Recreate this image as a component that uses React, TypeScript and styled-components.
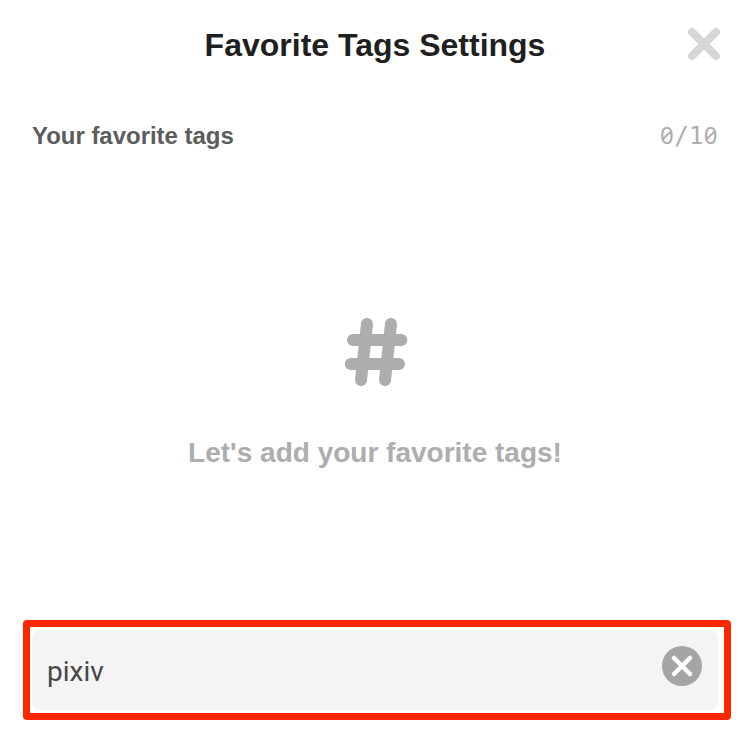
import React from "react";
import styled, { createGlobalStyle } from "styled-components";

const GlobalStyle = createGlobalStyle`
  *, *::before, *::after { box-sizing: border-box; }
  body { margin: 0; background: #fff; font-family: "Liberation Sans", Arial, sans-serif; }
`;

const Dialog = styled.main`
  display: flex;
  flex-direction: column;
  width: 750px;
  height: 736px;
  background: #fff;
  overflow: hidden;
`;

const Header = styled.header`
  display: grid;
  grid-template-columns: 64px 1fr 64px;
  align-items: center;
  height: 88px;
`;

const Title = styled.h1`
  grid-column: 2;
  margin: 0;
  padding-top: 2px;
  text-align: center;
  white-space: nowrap;
  font-size: 32px;
  line-height: 40px;
  font-weight: 700;
  color: #1f1f1f;
`;

const IconButton = styled.button`
  display: block;
  align-self: start;
  padding: 0;
  border: 0;
  background: none;
  line-height: 0;
`;

const CloseButton = styled(IconButton)`
  align-self: center;
  justify-self: end;
  margin-right: 28px;
`;

const SectionHeader = styled.div`
  display: flex;
  justify-content: space-between;
  align-items: center;
  height: 32px;
  margin-top: 32px;
  padding: 0 32px;
`;

const SectionTitle = styled.h2`
  margin: 0;
  font-size: 24px;
  line-height: 32px;
  font-weight: 700;
  letter-spacing: -0.03px;
  color: #5c5c5c;
`;

const Counter = styled.div`
  display: grid;
  grid-template-columns: repeat(4, 14.6px);
  justify-items: center;
  align-items: baseline;
  margin-bottom: 2px;
  line-height: 32px;
  color: #adadad;
`;

const Digit = styled.span<{ $font: string; $size: number }>`
  font-family: ${(p) => p.$font}, monospace;
  font-size: ${(p) => p.$size}px;
  font-feature-settings: "zero";
`;

const Empty = styled.section`
  display: flex;
  flex-direction: column;
  align-items: center;
  height: 468px;
  padding-top: 160px;
`;

const EmptyText = styled.p`
  margin: 41px 0 0;
  font-size: 28px;
  line-height: 40px;
  font-weight: 700;
  color: #adadad;
`;

const Highlight = styled.div`
  width: 708px;
  height: 100px;
  margin-left: 23px;
  padding: 3px 6px 3px 2px;
  border: 7px solid #ff2600;
  border-radius: 4px;
`;

const Field = styled.label`
  display: flex;
  justify-content: space-between;
  height: 80px;
  padding: 16px 16px 0 15px;
  border-radius: 8px;
  background: #f4f4f4;
`;

const Input = styled.input`
  flex: 1;
  min-width: 0;
  height: 50px;
  padding: 0;
  border: 0;
  outline: 0;
  background: transparent;
  font-family: Roboto, sans-serif;
  font-size: 28px;
  color: #474747;
`;

export default function App() {
  return (
    <>
      <GlobalStyle />
      <Dialog>
        <Header>
          <Title>Favorite Tags Settings</Title>
          <CloseButton aria-label="Close">
            <svg width="36" height="36" viewBox="0 0 36 36" fill="none" stroke="#d6d6d6" strokeWidth="8" strokeLinecap="round">
              <path d="M6 6 30 30M30 6 6 30" />
            </svg>
          </CloseButton>
        </Header>
        <SectionHeader>
          <SectionTitle>Your favorite tags</SectionTitle>
          <Counter>
            <Digit $font="Noto Sans" $size={24}>0</Digit>
            <Digit $font="DejaVu Sans Mono" $size={24}>/</Digit>
            <Digit $font="DejaVu Sans Mono" $size={24}>1</Digit>
            <Digit $font="Noto Sans" $size={24}>0</Digit>
          </Counter>
        </SectionHeader>
        <Empty>
          <svg width="72" height="80" viewBox="0 0 72 80" fill="none" stroke="#adadad" strokeWidth="12" strokeLinecap="round">
            <path d="M14 28H62.4M11.7 52H60M28 12 22 68M52 12 46 68" />
          </svg>
          <EmptyText>Let's add your favorite tags!</EmptyText>
        </Empty>
        <Highlight>
          <Field>
            <Input defaultValue="pixiv" aria-label="Tag" />
            <IconButton aria-label="Clear">
              <svg width="40" height="40" viewBox="0 0 40 40">
                <circle cx="20" cy="20" r="20" fill="#a5a5a5" />
                <path d="M12 12 28 28M28 12 12 28" stroke="#fff" strokeWidth="4.5" strokeLinecap="round" />
              </svg>
            </IconButton>
          </Field>
        </Highlight>
      </Dialog>
    </>
  );
}
